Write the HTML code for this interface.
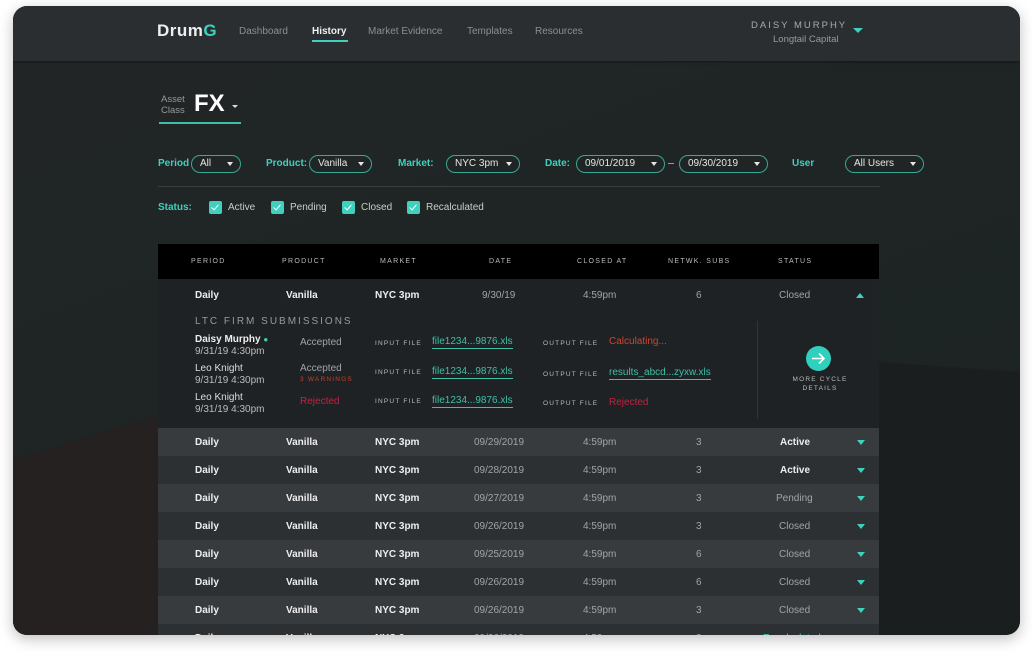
<!DOCTYPE html>
<html><head><meta charset="utf-8"><style>
*{margin:0;padding:0;box-sizing:border-box}
body{width:1033px;height:655px;background:#fff;font-family:"Liberation Sans",sans-serif;position:relative;overflow:hidden}
.frame{position:absolute;left:13px;top:6px;width:1007px;height:629px;border-radius:14px;overflow:hidden;background:linear-gradient(160deg,#222526 0%,#1e2524 50%,#1b2322 100%);box-shadow:0 4px 14px rgba(0,0,0,.25)}
.bg2{position:absolute;left:0;top:0;width:1007px;height:629px}
.hdr{position:absolute;left:0;top:0;width:1007px;height:55px;background:#2b2e31;box-shadow:0 1px 3px rgba(0,0,0,.4)}
.abs{position:absolute;white-space:nowrap}
.nav{font-size:10px;color:#8b8f93;top:20px}
.teal{color:#3fd1bd}
.pill{position:absolute;height:18px;border:1.5px solid #3aa898;border-radius:10px;color:#e6e6e6;font-size:10px;line-height:16px;padding-left:8px}
.pill i{position:absolute;right:7px;top:6px;border-left:3.5px solid transparent;border-right:3.5px solid transparent;border-top:4px solid #e6e6e6}
.lbl{font-size:10px;font-weight:bold;color:#3fd1bd;top:152px}
.cb{position:absolute;top:195px;width:13px;height:13px;background:#3fd1bd;border-radius:2px}
.cb:after{content:"";position:absolute;left:4px;top:2px;width:3px;height:6px;border-right:1.5px solid #fff;border-bottom:1.5px solid #fff;transform:rotate(40deg)}
.cbt{top:196px;font-size:10px;color:#ccc}
.tbl{position:absolute;left:145px;top:238px;width:721px}
.th{height:35px;background:#000;position:relative}
.th span{position:absolute;top:14px;font-size:7px;letter-spacing:1.3px;color:#bbb}
.row{height:28px;position:relative;font-size:10px}
.row span{position:absolute;top:9px}
.b{font-weight:bold;color:#eee}
.g{color:#a0a4a8}
.arr{position:absolute;left:699px;top:12px;border-left:4px solid transparent;border-right:4px solid transparent;border-top:5px solid #3fd1bd}
.exp{height:149px;background:#1f2225;position:relative;font-size:10px}
.exp span{position:absolute}
.small{font-size:6.5px;letter-spacing:1.2px;color:#bbb}
.lnk{color:#3fbfa8;border-bottom:1px solid #3fbfa8;padding-bottom:1px}
</style></head><body>
<div class="frame">
<svg class="bg2" viewBox="0 0 1007 629"><polygon points="0,454 145,409 500,325 867,356 1007,366 1007,629 0,629" fill="#1b1e1e"/><polygon points="0,454 145,409 145,629 0,629" fill="#242120"/></svg>
<div class="hdr">
<div class="abs" style="left:144px;top:15px;font-size:17px;font-weight:bold;color:#eee;letter-spacing:.5px">Drum<span class="teal">G</span></div>
<div class="abs nav" style="left:226px">Dashboard</div>
<div class="abs nav" style="left:299px;color:#eee;font-weight:bold">History</div>
<div class="abs" style="left:299px;top:34px;width:36px;height:2px;background:#3fd1bd"></div>
<div class="abs nav" style="left:355px">Market Evidence</div>
<div class="abs nav" style="left:454px">Templates</div>
<div class="abs nav" style="left:522px">Resources</div>
<div class="abs" style="left:738px;top:14px;font-size:9.5px;letter-spacing:2px;color:#aaa">DAISY MURPHY</div>
<div class="abs" style="left:760px;top:28px;font-size:9.5px;color:#999">Longtail Capital</div>
<div class="abs" style="left:840px;top:22px;border-left:5px solid transparent;border-right:5px solid transparent;border-top:5px solid #3fd1bd"></div>
</div>
<div class="abs" style="left:148px;top:88px;font-size:9.5px;color:#999;line-height:11px">Asset<br>Class</div>
<div class="abs" style="left:181px;top:84px;font-size:24px;font-weight:bold;color:#fff">FX</div>
<div class="abs" style="left:219px;top:99px;border-left:3px solid transparent;border-right:3px solid transparent;border-top:3px solid #ddd"></div>
<div class="abs" style="left:146px;top:116px;width:82px;height:2px;background:#3fbfa8"></div>

<div class="abs lbl" style="left:145px">Period</div>
<div class="pill" style="left:178px;top:149px;width:50px">All<i></i></div>
<div class="abs lbl" style="left:253px">Product:</div>
<div class="pill" style="left:296px;top:149px;width:63px">Vanilla<i></i></div>
<div class="abs lbl" style="left:385px">Market:</div>
<div class="pill" style="left:433px;top:149px;width:74px">NYC 3pm<i></i></div>
<div class="abs lbl" style="left:532px">Date:</div>
<div class="pill" style="left:563px;top:149px;width:89px">09/01/2019<i></i></div>
<div class="abs" style="left:655px;top:157px;width:6px;height:1px;background:#999"></div>
<div class="pill" style="left:666px;top:149px;width:89px">09/30/2019<i></i></div>
<div class="abs lbl" style="left:779px">User</div>
<div class="pill" style="left:832px;top:149px;width:79px">All Users<i></i></div>
<div class="abs" style="left:145px;top:180px;width:722px;height:1px;background:#3a3e41"></div>
<div class="abs lbl" style="left:145px;top:196px">Status:</div>
<div class="cb" style="left:196px"></div><div class="abs cbt" style="left:215px">Active</div>
<div class="cb" style="left:258px"></div><div class="abs cbt" style="left:277px">Pending</div>
<div class="cb" style="left:329px"></div><div class="abs cbt" style="left:348px">Closed</div>
<div class="cb" style="left:394px"></div><div class="abs cbt" style="left:413px">Recalculated</div>

<div class="tbl">
<div class="th"><span style="left:33px">PERIOD</span><span style="left:124px">PRODUCT</span><span style="left:222px">MARKET</span><span style="left:331px">DATE</span><span style="left:419px">CLOSED AT</span><span style="left:510px">NETWK. SUBS</span><span style="left:620px">STATUS</span></div>
<div class="exp">
<span class="b" style="left:37px;top:11px">Daily</span><span class="b" style="left:128px;top:11px">Vanilla</span><span class="b" style="left:217px;top:11px">NYC 3pm</span><span class="g" style="left:324px;top:11px">9/30/19</span><span class="g" style="left:425px;top:11px">4:59pm</span><span class="g" style="left:538px;top:11px">6</span><span class="g" style="left:621px;top:11px">Closed</span>
<span style="left:698px;top:14px;border-left:4px solid transparent;border-right:4px solid transparent;border-bottom:5px solid #3fd1bd"></span>
<span style="left:37px;top:37px;font-size:10px;letter-spacing:2px;color:#999">LTC FIRM SUBMISSIONS</span>
<span class="b" style="left:37px;top:55px">Daisy Murphy <b style="color:#3fd1bd;font-size:8px">●</b></span><span class="g" style="left:37px;top:67px;color:#bbb">9/31/19 4:30pm</span>
<span style="left:37px;top:84px;color:#ddd">Leo Knight</span><span style="left:37px;top:96px;color:#bbb">9/31/19 4:30pm</span>
<span style="left:37px;top:113px;color:#ddd">Leo Knight</span><span style="left:37px;top:125px;color:#bbb">9/31/19 4:30pm</span>
<span class="g" style="left:142px;top:58px">Accepted</span>
<span class="g" style="left:142px;top:84px">Accepted</span><span style="left:142px;top:97px;font-size:6.5px;letter-spacing:1.2px;color:#c0432b">3 WARNINGS</span>
<span style="left:142px;top:117px;color:#c4213d">Rejected</span>
<span class="small" style="left:217px;top:61px">INPUT FILE</span><span class="lnk" style="left:274px;top:57px">file1234...9876.xls</span>
<span class="small" style="left:217px;top:90px">INPUT FILE</span><span class="lnk" style="left:274px;top:87px">file1234...9876.xls</span>
<span class="small" style="left:217px;top:119px">INPUT FILE</span><span class="lnk" style="left:274px;top:116px">file1234...9876.xls</span>
<span class="small" style="left:385px;top:61px">OUTPUT FILE</span><span style="left:451px;top:57px;color:#d0442a">Calculating...</span>
<span class="small" style="left:385px;top:92px">OUTPUT FILE</span><span class="lnk" style="left:451px;top:88px">results_abcd...zyxw.xls</span>
<span class="small" style="left:385px;top:121px">OUTPUT FILE</span><span style="left:451px;top:118px;color:#c4213d">Rejected</span>
<span style="left:599px;top:42px;width:1px;height:98px;background:#30343a"></span>
<span style="left:648px;top:67px;width:25px;height:25px;border-radius:50%;background:#2fd1bd"></span>
<svg style="position:absolute;left:653px;top:73px" width="15" height="13" viewBox="0 0 15 13"><path d="M1 6.5H13M8 1.5L13 6.5L8 11.5" stroke="#fff" stroke-width="1.6" fill="none"/></svg>
<span class="small" style="left:632px;top:96px;text-align:center;width:60px;line-height:9px;white-space:normal">MORE CYCLE DETAILS</span>
</div>
<div class="row" style="background:#383b3e"><span class="b" style="left:37px">Daily</span><span class="b" style="left:128px">Vanilla</span><span class="b" style="left:217px">NYC 3pm</span><span class="g" style="left:316px">09/29/2019</span><span class="g" style="left:425px">4:59pm</span><span class="g" style="left:538px">3</span><span class="b" style="left:622px">Active</span><i class="arr"></i></div>
<div class="row" style="background:#2d3033"><span class="b" style="left:37px">Daily</span><span class="b" style="left:128px">Vanilla</span><span class="b" style="left:217px">NYC 3pm</span><span class="g" style="left:316px">09/28/2019</span><span class="g" style="left:425px">4:59pm</span><span class="g" style="left:538px">3</span><span class="b" style="left:622px">Active</span><i class="arr"></i></div>
<div class="row" style="background:#383b3e"><span class="b" style="left:37px">Daily</span><span class="b" style="left:128px">Vanilla</span><span class="b" style="left:217px">NYC 3pm</span><span class="g" style="left:316px">09/27/2019</span><span class="g" style="left:425px">4:59pm</span><span class="g" style="left:538px">3</span><span class="g" style="left:618px">Pending</span><i class="arr"></i></div>
<div class="row" style="background:#2d3033"><span class="b" style="left:37px">Daily</span><span class="b" style="left:128px">Vanilla</span><span class="b" style="left:217px">NYC 3pm</span><span class="g" style="left:316px">09/26/2019</span><span class="g" style="left:425px">4:59pm</span><span class="g" style="left:538px">3</span><span class="g" style="left:621px">Closed</span><i class="arr"></i></div>
<div class="row" style="background:#383b3e"><span class="b" style="left:37px">Daily</span><span class="b" style="left:128px">Vanilla</span><span class="b" style="left:217px">NYC 3pm</span><span class="g" style="left:316px">09/25/2019</span><span class="g" style="left:425px">4:59pm</span><span class="g" style="left:538px">6</span><span class="g" style="left:621px">Closed</span><i class="arr"></i></div>
<div class="row" style="background:#2d3033"><span class="b" style="left:37px">Daily</span><span class="b" style="left:128px">Vanilla</span><span class="b" style="left:217px">NYC 3pm</span><span class="g" style="left:316px">09/26/2019</span><span class="g" style="left:425px">4:59pm</span><span class="g" style="left:538px">6</span><span class="g" style="left:621px">Closed</span><i class="arr"></i></div>
<div class="row" style="background:#383b3e"><span class="b" style="left:37px">Daily</span><span class="b" style="left:128px">Vanilla</span><span class="b" style="left:217px">NYC 3pm</span><span class="g" style="left:316px">09/26/2019</span><span class="g" style="left:425px">4:59pm</span><span class="g" style="left:538px">3</span><span class="g" style="left:621px">Closed</span><i class="arr"></i></div>
<div class="row" style="background:#2d3033"><span class="b" style="left:37px">Daily</span><span class="b" style="left:128px">Vanilla</span><span class="b" style="left:217px">NYC 3pm</span><span class="g" style="left:316px">09/26/2019</span><span class="g" style="left:425px">4:59pm</span><span class="g" style="left:538px">3</span><span class="teal" style="left:605px">Recalculated</span><i class="arr"></i></div>
</div>
</div>
</body></html>
